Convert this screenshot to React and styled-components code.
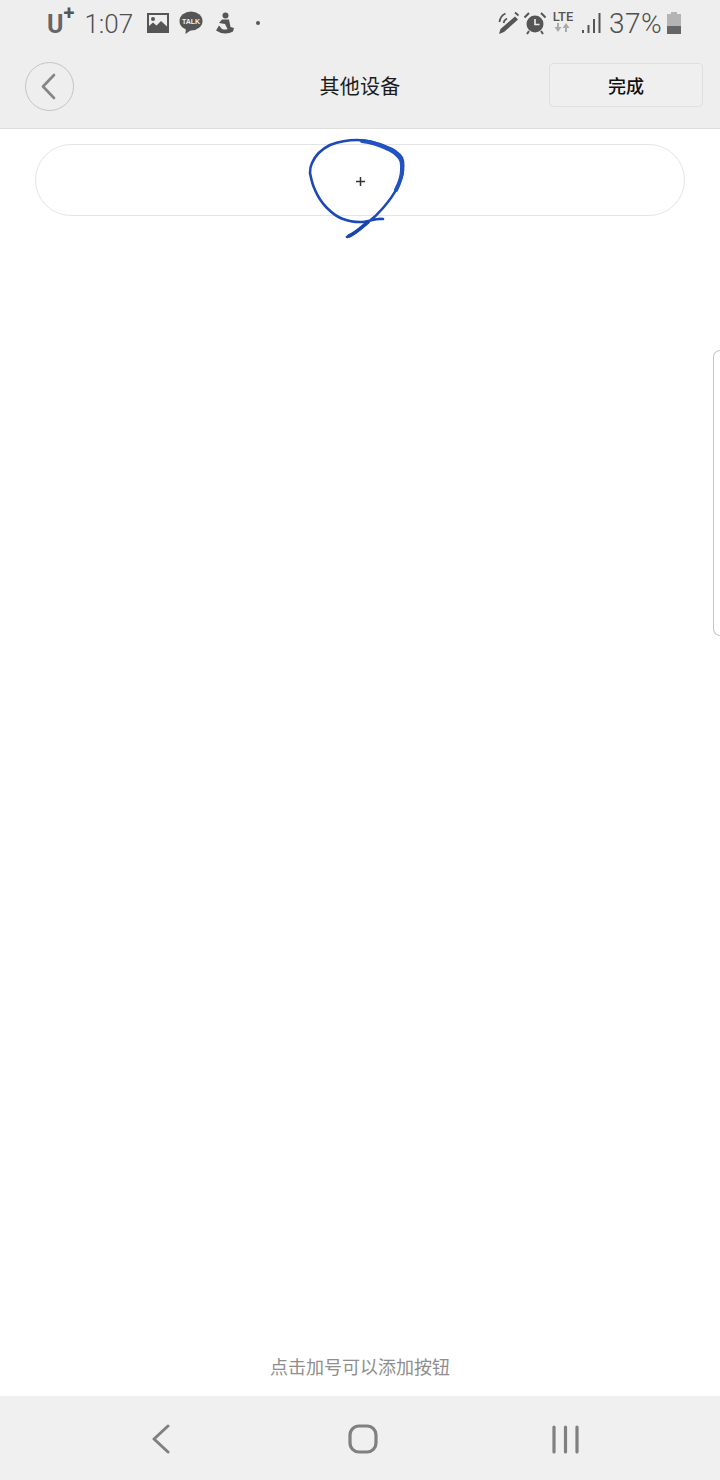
import React from "react";
import styled, { createGlobalStyle } from "styled-components";

const Global = createGlobalStyle`
  html, body { margin: 0; padding: 0; background: #fff; }
  * { box-sizing: border-box; }
`;
const CJK = `"Noto Sans CJK SC", "Noto Sans", sans-serif`;

const Page = styled.div`
  position: relative; width: 720px; height: 1480px; display: flex; flex-direction: column;
  background: #fff; overflow: hidden; font-family: Roboto, ${CJK};
`;
const Header = styled.header`
  height: 129px; background: #eeeeee; border-bottom: 1px solid #dedede; flex: none;
`;
const StatusBar = styled.div`
  height: 46px; padding: 0 39px 0 47px; display: flex; justify-content: space-between; align-items: center; color: #5a5a5a;
`;
const StatusGroup = styled.div`display: flex; align-items: center;`;
const CarrierMark = styled.span`
  font-size: 25px; font-weight: 700; color: #666; line-height: 30px; margin-top: 3px;
`;
const CarrierPlus = styled.span`
  font-size: 20px; font-weight: 700; color: #555; line-height: 20px; margin: -20px 0 0 0;
`;
const StatusTime = styled.span`
  font-size: 26px; font-weight: 300; line-height: 30px; color: #4f4f4f; margin: 1px 0 0 10px;
`;
const StatusPercent = styled.span`
  font-size: 28px; font-weight: 300; line-height: 30px; color: #4f4f4f; letter-spacing: 0.4px; margin: 1px 0 0 8px;
`;
const Ico = styled.svg`display: block; flex: none; margin: ${p => p.$m || 0};`;
const LteBox = styled.div`
  width: 24px; margin: 0 0 0 4px; display: flex; flex-direction: column; align-items: center;
  font-family: Roboto, sans-serif; font-size: 13px; font-weight: 500; line-height: 12px; color: #555; padding-bottom: 4px;
`;
const NavBar = styled.div`
  height: 82px; padding: 0 17px; display: grid; grid-template-columns: 1fr auto 1fr; align-items: center;
`;
const BackButton = styled.button`
  width: 49px; height: 49px; border-radius: 50%; border: 1px solid #c4c4c4; background: transparent; padding: 0 3px 0 0;
  display: flex; align-items: center; justify-content: center; margin: -2px 0 0 8px;
`;
const Title = styled.h1`
  margin: -2px 0 0; font: 400 20px/28px ${CJK}; color: #1c1c1c; letter-spacing: 0.3px;
`;
const DoneButton = styled.button`
  justify-self: end; width: 154px; height: 44px; border: 1px solid #dfdfdf; border-radius: 4px; background: #efefef;
  font: 500 18px/24px ${CJK}; color: #111; margin-top: -5px; padding: 0;
`;
const Main = styled.main`
  position: relative; flex: 1; padding: 15px 35px 0; display: flex; flex-direction: column; justify-content: space-between;
`;
const AddSlot = styled.div`
  height: 72px; border: 1px solid #e4e4e4; border-radius: 36px; display: flex; align-items: center; justify-content: center;
  font-size: 0; padding-top: 2px;
`;
const Hint = styled.p`
  margin: 0 0 17px; text-align: center; font: 400 18px/26px ${CJK}; color: #8e8e8e;
`;
const Scribble = styled.svg`
  position: absolute; left: 290px; top: 130px; pointer-events: none;
`;
const EdgeHandle = styled.div`
  position: absolute; right: 0; top: 350px; width: 7px; height: 286px; border: 1px solid #c6c6c6; border-right: none;
  border-radius: 7px 0 0 7px; background: #fff;
`;
const BottomBar = styled.nav`
  height: 84px; flex: none; background: #f0f0f0; display: grid; grid-template-columns: repeat(3, 202px); justify-content: center; align-items: center; justify-items: center;
  padding: 2px 0 0 6px;
`;
const Dot = styled.span`width: 4px; height: 4px; border-radius: 50%; background: #555; margin: 0 0 0 21px;`;

const ImageIcon = () => (
  <Ico $m="0 0 0 14px" width="22" height="20" viewBox="0 0 22 20">
    <path fill="#555" fillRule="evenodd" d="M0 0h22v20H0zM2 2v11l4-3.5 3.500 3L14 8l6 5.500V2z" />
    <circle cx="6" cy="6" r="2" fill="#555" />
  </Ico>
);
const TalkIcon = () => (
  <Ico $m="0 0 0 10px" width="24" height="24" viewBox="0 0 24 24">
    <ellipse cx="12" cy="10" rx="11.500" ry="9.500" fill="#555" />
    <path d="M7 16l-.5 7 7-5z" fill="#555" />
    <text x="12" y="12.600" textAnchor="middle" fontFamily="Liberation Sans, sans-serif" fontSize="7" fontWeight="700" fill="#eee">TALK</text>
  </Ico>
);
const FigureIcon = () => (
  <Ico $m="0 0 0 12px" width="20" height="22" viewBox="0 0 20 22">
    <circle cx="10.500" cy="3.500" r="3" fill="#555" />
    <path fill="#555" fillRule="evenodd" d="M7 7.500h7l1.500 7.500 3.500 1-1 3.500c-3 2-8 2.500-12 1.500L1 18.500l3-5 3 3.500c2 .8 4 .8 5.500 0L10 12 4 11z" />
  </Ico>
);
const PenIcon = () => (
  <Ico width="24" height="24" viewBox="0 0 24 24">
    <path fill="#555" d="M18 5.500l3 3L7 21l-5 2 1.500-5z" />
    <path fill="none" stroke="#555" strokeWidth="1.800" d="M2.500 11C3 7 5 4 8.500 2.500M6.500 12C7 10 8 8.500 10 7.500M18 1.500l3.500 3" />
  </Ico>
);
const AlarmIcon = () => (
  <Ico $m="0 0 0 2px" width="24" height="24" viewBox="0 0 24 24">
    <circle cx="12" cy="13" r="8.500" fill="#555" />
    <path fill="none" stroke="#eee" strokeWidth="1.600" d="M12 8v5.500h4.500" />
    <path fill="none" stroke="#555" strokeWidth="2" d="M1.500 6.500L6 2M22.500 6.500L18 2M6 20l-2 3M18 20l2 3" />
  </Ico>
);
const LteArrows = () => (
  <Ico width="18" height="9" viewBox="0 0 18 9">
    <path fill="#aaa" d="M3 0h2v4h2.500L4 9 .5 4H3zM13 9h-2V5H8.500L12 0l3.500 5H13z" />
  </Ico>
);
const SignalIcon = () => (
  <Ico $m="0 0 0 7px" width="19" height="22" viewBox="0 0 19 22">
    <path fill="#555" d="M0 18h2v3H0zM5.500 13h2v8h-2zM11 7h2v14h-2zM16.500 1h2v20h-2z" />
  </Ico>
);
const BatteryIcon = () => (
  <Ico $m="0 0 0 5px" width="14" height="22" viewBox="0 0 14 22">
    <path fill="#b4b4b4" d="M4 0h6v2h4v12H0V2h4z" />
    <path fill="#666" d="M0 14h14v8H0z" />
  </Ico>
);
const Chevron = ({ w, h, color, sw }) => (
  <Ico width={w} height={h} viewBox={`0 0 ${w} ${h}`}>
    <path fill="none" stroke={color} strokeWidth={sw} strokeLinecap="round" strokeLinejoin="round"
      d={`M${w - 2} 2L2 ${h / 2}L${w - 2} ${h - 2}`} />
  </Ico>
);

export default function App() {
  return (
    <Page>
      <Global />
      <Header>
        <StatusBar>
          <StatusGroup>
            <CarrierMark>U</CarrierMark>
            <CarrierPlus>+</CarrierPlus>
            <StatusTime>1:07</StatusTime>
            <ImageIcon />
            <TalkIcon />
            <FigureIcon />
            <Dot />
          </StatusGroup>
          <StatusGroup>
            <PenIcon />
            <AlarmIcon />
            <LteBox>LTE<LteArrows /></LteBox>
            <SignalIcon />
            <StatusPercent>37%</StatusPercent>
            <BatteryIcon />
          </StatusGroup>
        </StatusBar>
        <NavBar>
          <BackButton aria-label="返回"><Chevron w={15} h={27} color="#858585" sw={2.6} /></BackButton>
          <Title>其他设备</Title>
          <DoneButton>完成</DoneButton>
        </NavBar>
      </Header>
      <Main>
        <AddSlot>
          <Ico width="9" height="9" viewBox="0 0 9 9" aria-label="添加">
            <path fill="none" stroke="#333" strokeWidth="1.500" d="M4.500 0v9M0 4.500h9" />
          </Ico>
        </AddSlot>
        <Hint>点击加号可以添加按钮</Hint>
      </Main>
      <BottomBar>
        <Chevron w={18} h={30} color="#808080" sw={3} />
        <Ico width="30" height="30" viewBox="0 0 30 30">
          <rect x="2" y="2" width="26" height="26" rx="9" fill="none" stroke="#808080" strokeWidth="3.200" />
        </Ico>
        <Ico width="27" height="29" viewBox="0 0 27 29">
          <path stroke="#808080" strokeWidth="3.200" strokeLinecap="round" d="M2 2v25M13.500 2v25M25 2v25" />
        </Ico>
      </BottomBar>
      <EdgeHandle />
      <Scribble width="130" height="115" viewBox="0 0 130 115">
        <path fill="none" stroke="#1d49b8" strokeWidth="2.600" strokeLinecap="round" strokeLinejoin="round"
          d="M57 107C66 103 71 98 77 93C84 88 88 84 93 78C100 70 104 64 107 58C110 52 113 46 113 40C113 34 114 32 112 28C108 22 103 19 97 17C88 13 78 10 67 10C57 10 48 12 40 15C32 19 25 26 22 33C20 37 20 40 20 43C21 48 22 54 25 60C28 67 32 73 37 78C42 83 47 87 53 89C58 91 64 92 70 92C78 92 85 88 93 89" />
        <path fill="none" stroke="#2152c2" strokeWidth="4" strokeLinecap="round"
          d="M106 60C110 52 112 46 112 40C112 34 113 32 110 28C106 23 102 20 96 18C88 14 80 12 72 11" />
        <path fill="none" stroke="#1a44b0" strokeWidth="3.600" strokeLinecap="round"
          d="M59 106C66 103 72 97 78 92" />
      </Scribble>
    </Page>
  );
}
